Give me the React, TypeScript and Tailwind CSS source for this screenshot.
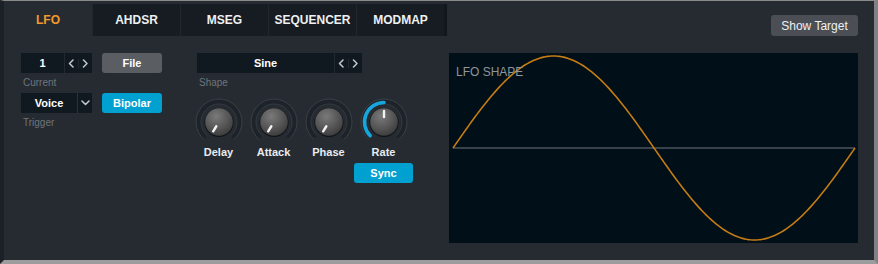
import React from "react";

const tabs = ["LFO", "AHDSR", "MSEG", "SEQUENCER", "MODMAP"];

const Chevron = ({ dir }: { dir: "left" | "right" | "down" }) => {
  const d =
    dir === "left" ? "M5 1 L1.5 4.5 L5 8" : dir === "right" ? "M1.5 1 L5 4.5 L1.5 8" : "M1 2 L4.5 5.5 L8 2";
  const w = dir === "down" ? 9 : 7;
  const h = dir === "down" ? 8 : 9;
  return (
    <svg width={w} height={h} viewBox={`0 0 ${w} ${h}`}>
      <path d={d} fill="none" stroke="#c4c9ce" strokeWidth="1.5" strokeLinecap="round" strokeLinejoin="round" />
    </svg>
  );
};

const Arrows = () => (
  <div className="flex h-full w-[28px] items-center border-l border-[#222a31]">
    <div className="flex flex-1 justify-center border-r border-[#222a31]">
      <Chevron dir="left" />
    </div>
    <div className="flex flex-1 justify-center">
      <Chevron dir="right" />
    </div>
  </div>
);

const pt = (r: number, a: number) => {
  const rad = (a * Math.PI) / 180;
  return [24 + r * Math.sin(rad), 24 - r * Math.cos(rad)];
};

const arc = (r: number, a0: number, a1: number) => {
  const [x0, y0] = pt(r, a0);
  const [x1, y1] = pt(r, a1);
  const large = a1 - a0 > 180 ? 1 : 0;
  return `M${x0} ${y0} A${r} ${r} 0 ${large} 1 ${x1} ${y1}`;
};

const Knob = ({ label, angle, active }: { label: string; angle: number; active?: boolean }) => {
  const [ix0, iy0] = pt(5, angle);
  const [ix1, iy1] = pt(11, angle);
  const id = `kg-${label}`;
  return (
    <div className="flex w-[55px] flex-col items-center">
      <svg width="48" height="48" viewBox="0 0 48 48">
        <defs>
          <radialGradient id={id} cx="40%" cy="30%" r="75%">
            <stop offset="0%" stopColor="#7a7a7a" />
            <stop offset="60%" stopColor="#555555" />
            <stop offset="100%" stopColor="#3a3a3a" />
          </radialGradient>
        </defs>
        <path d={arc(20.5, -140, 140)} fill="none" stroke="#1d2329" strokeWidth="5" />
        <path d={arc(23, -140, 140)} fill="none" stroke="#3a4047" strokeWidth="1" />
        <path d={arc(18, -140, 140)} fill="none" stroke="#343a41" strokeWidth="1" />
        {active && (
          <path d={arc(19.5, -135, 0)} fill="none" stroke="#17a6dc" strokeWidth="3.5" strokeLinecap="round" />
        )}
        <circle cx="24" cy="24.5" r="14.5" fill="#101418" />
        <circle cx="24" cy="24" r="13.8" fill={`url(#${id})`} />
        <line x1={ix0} y1={iy0} x2={ix1} y2={iy1} stroke="#f2f2f2" strokeWidth="2.4" strokeLinecap="round" />
      </svg>
      <span className="-mt-[1px] text-[11px] font-bold leading-[14px] text-[#e9ecef]">{label}</span>
    </div>
  );
};

const sinePath = () => {
  const x0 = 4;
  const x1 = 406;
  const mid = 95;
  const amp = 92;
  const pts: string[] = [];
  for (let i = 0; i <= 200; i++) {
    const x = x0 + ((x1 - x0) * i) / 200;
    const y = mid - amp * Math.sin((2 * Math.PI * i) / 200);
    pts.push(`${i === 0 ? "M" : "L"}${x.toFixed(2)} ${y.toFixed(2)}`);
  }
  return pts.join(" ");
};

const App = () => {
  return (
    <div className="flex h-[264px] w-[878px] flex-col overflow-hidden border-t border-b-4 border-l-4 border-r-4 border-t-[#8a8a8a] border-b-[#9c9c9c] border-l-[#1b2127] border-r-[#7e8286] bg-[#262b32] font-['Liberation_Sans',Arial,sans-serif]">
      {/* HEADER */}
      <div className="flex h-[35px] shrink-0">
        <div className="mt-[3px] flex h-[32px]">
          {tabs.map((t, i) => (
            <div
              key={t}
              className={
                i === 0
                  ? "flex w-[88px] items-center justify-center bg-[#262b32] text-[12px] font-bold text-[#f39a2c]"
                  : "flex w-[88px] items-center justify-center border-l border-[#20272d] bg-[#161c22] text-[12px] font-bold text-[#eef0f2]"
              }
            >
              {t}
            </div>
          ))}
          <div className="w-[3px] bg-[#11171c]" />
        </div>
        <div className="flex-1" />
        <button className="mr-[16px] mt-[14px] h-[21px] w-[87px] rounded-[3px] bg-[#4b4f55] text-[12px] text-[#eef0f2]">
          Show Target
        </button>
      </div>

      {/* BODY */}
      <div className="flex flex-1 pl-[17px] pt-[17px]">
        {/* left controls */}
        <div className="flex w-[141px] flex-col">
          <div className="flex h-[20px] gap-[10px]">
            <div className="flex h-full w-[71px] bg-[#111920]">
              <div className="flex flex-1 items-center justify-center text-[11px] font-bold text-white">1</div>
              <Arrows />
            </div>
            <button className="h-full w-[60px] rounded-[3px] bg-[#5a5e63] text-[11px] font-bold text-white">File</button>
          </div>
          <span className="mt-[3px] pl-[2px] text-[10px] leading-[14px] text-[#6e757c]">Current</span>
          <div className="mt-[3px] flex h-[20px] gap-[10px]">
            <div className="flex h-full w-[71px] bg-[#111920]">
              <div className="flex flex-1 items-center justify-center text-[11px] font-bold text-white">Voice</div>
              <div className="flex w-[15px] items-center justify-center border-l border-[#2a323a]">
                <Chevron dir="down" />
              </div>
            </div>
            <button className="h-full w-[60px] rounded-[3px] bg-[#00a1d0] text-[11px] font-bold text-white">Bipolar</button>
          </div>
          <span className="mt-[3px] pl-[2px] text-[10px] leading-[14px] text-[#6e757c]">Trigger</span>
        </div>

        {/* middle controls */}
        <div className="ml-[29px] flex w-[220px] flex-col">
          <div className="ml-[6px] flex h-[20px] w-[165px] bg-[#111920]">
            <div className="flex flex-1 items-center justify-center text-[11px] font-bold text-white">Sine</div>
            <Arrows />
          </div>
          <span className="ml-[8px] mt-[3px] text-[10px] leading-[14px] text-[#6e757c]">Shape</span>
          <div className="mt-[8px] flex">
            <Knob label="Delay" angle={-148} />
            <Knob label="Attack" angle={-148} />
            <Knob label="Phase" angle={-148} />
            <Knob label="Rate" angle={0} active />
          </div>
          <div className="mt-[4px] flex">
            <div className="w-[165px]" />
            <div className="flex w-[55px] justify-center">
              <button className="h-[20px] w-[59px] shrink-0 rounded-[3px] bg-[#00a1d0] text-[11px] font-bold text-white">
                Sync
              </button>
            </div>
          </div>
        </div>

        {/* LFO shape graph */}
        <div className="relative ml-auto mr-[16px] h-[190px] w-[409px] bg-[#010f19]">
          <span className="absolute left-[7px] top-[10px] text-[12px] text-[#8f969c]">LFO SHAPE</span>
          <svg width="409" height="190" viewBox="0 0 409 190" className="block">
            <line x1="4" y1="95" x2="406" y2="95" stroke="#6f777e" strokeWidth="1.2" />
            <path d={sinePath()} fill="none" stroke="#c57c12" strokeWidth="1.6" />
          </svg>
        </div>
      </div>
    </div>
  );
};

export default App;
